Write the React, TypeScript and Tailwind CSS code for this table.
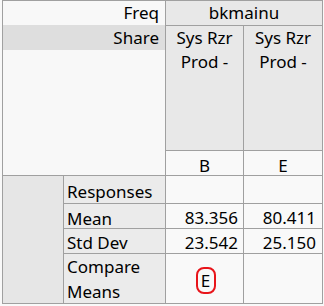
const font = { fontFamily: '"Noto Sans", "Open Sans", sans-serif' };

function Label({ children, className = "" }: { children: React.ReactNode; className?: string }) {
  return (
    <div className={`border-b border-r border-[#a0a0a0] bg-[#ebebeb] pl-[3px] text-[17px] leading-[25px] text-black ${className}`}>
      {children}
    </div>
  );
}

function Num({ children, className = "", last = false }: { children?: React.ReactNode; className?: string; last?: boolean }) {
  return (
    <div
      className={`border-b border-[#a0a0a0] bg-[#f9f9f9] text-right text-[17px] leading-[25px] text-black ${
        last ? "pr-[6px]" : "border-r pr-[5px]"
      } ${className}`}
    >
      {children}
    </div>
  );
}

export default function App() {
  return (
    <div className="h-[306px] w-[324px] bg-[#f9f9f9]" style={font}>
      <div className="ml-[2px] grid w-[321px] grid-cols-[61px_102px_78px_78px] grid-rows-[25px_125px_25px_28px_25px_25px_50px] border border-b-0 border-[#a0a0a0]">
        {/* stub header */}
        <div className="col-span-2 row-span-3 flex flex-col border-b border-r border-[#a0a0a0] bg-[#f8f8f8] text-[17px] leading-[25px] text-black">
          <div className="h-[24px] pr-[6px] text-right leading-[24px]">Freq</div>
          <div className="h-[25px] bg-[#dedede] pr-[6px] text-right">Share</div>
        </div>

        <div className="col-span-2 border-b border-[#a0a0a0] bg-[#e8e8e8] text-center text-[17px] leading-[24px] text-black">
          bkmainu
        </div>

        <div className="border-b border-r border-[#a0a0a0] bg-[#e8e8e8] text-center text-[17px] leading-[24px] text-black">
          Sys Rzr
          <br />
          Prod -
        </div>
        <div className="border-b border-[#a0a0a0] bg-[#e8e8e8] text-center text-[17px] leading-[24px] text-black">
          Sys Rzr
          <br />
          Prod -
        </div>

        <div className="border-b border-r border-[#a0a0a0] bg-[#f9f9f9] pt-[2px] text-center text-[17px] leading-[25px] text-black">
          B
        </div>
        <div className="border-b border-[#a0a0a0] bg-[#f9f9f9] pt-[2px] text-center text-[17px] leading-[25px] text-black">
          E
        </div>

        {/* body */}
        <div className="row-span-4 border-b border-r border-[#a0a0a0] bg-[#e6e6e6]" />

        <Label className="pt-[3px]">Responses</Label>
        <Num />
        <Num last />

        <Label className="pt-[2px]">Mean</Label>
        <Num className="pt-[1px]">83.356</Num>
        <Num className="pt-[1px]" last>
          80.411
        </Num>

        <Label className="pt-[1px]">Std Dev</Label>
        <Num className="pt-[1px]">23.542</Num>
        <Num className="pt-[1px]" last>
          25.150
        </Num>

        <Label className="leading-[25px]">
          Compare
          <br />
          Means
        </Label>
        <div className="flex justify-center border-b border-r border-[#a0a0a0] bg-[#f9f9f9] pt-[13px] pl-[2px]">
          <span className="flex h-[27px] w-[20px] items-center justify-center rounded-[8px] border-2 border-[#e8141a] text-[17px] leading-none text-black">
            E
          </span>
        </div>
        <div className="border-b border-[#a0a0a0] bg-[#f9f9f9]" />
      </div>
    </div>
  );
}
